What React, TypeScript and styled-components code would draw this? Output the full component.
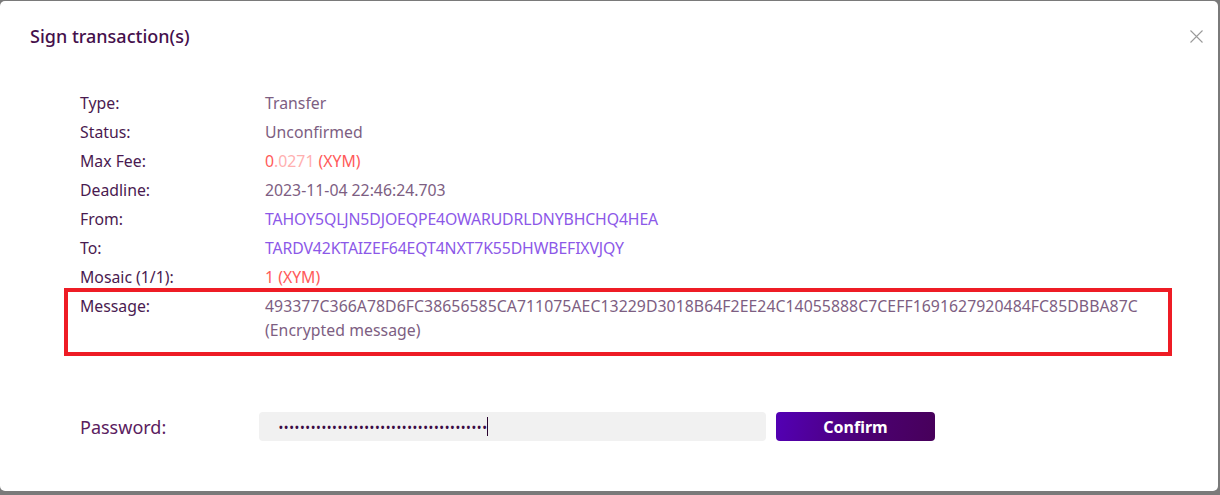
import React from "react";
import styled, { createGlobalStyle } from "styled-components";

const Global = createGlobalStyle`
  html, body { margin: 0; padding: 0; }
  body {
    background: #7a7a7a;
    font-family: "Noto Sans", "Open Sans", sans-serif;
    width: 1220px;
    height: 495px;
    overflow: hidden;
  }
`;

const Page = styled.div`
  width: 1220px;
  height: 495px;
  padding: 1px 2px 0 0;
  box-sizing: border-box;
`;

const Modal = styled.div`
  width: 1218px;
  height: 490px;
  background: #ffffff;
  border-radius: 5px;
  display: flex;
  flex-direction: column;
`;

const Header = styled.div`
  height: 72px;
  display: flex;
  align-items: center;
  justify-content: space-between;
  padding: 0 15px 0 30px;
  box-sizing: border-box;
`;

const Title = styled.h1`
  margin: 0;
  margin-top: -2px;
  font-size: 18px;
  font-weight: 500;
  color: #45104c;
`;

const Close = styled.button`
  border: none;
  background: none;
  padding: 0;
  width: 14px;
  height: 14px;
  margin-top: -2px;
  display: flex;
  align-items: center;
  justify-content: center;
  cursor: pointer;
`;

const Details = styled.div`
  padding: 15px 46px 0 64px;
  display: flex;
  flex-direction: column;
`;

const Row = styled.div`
  display: grid;
  grid-template-columns: 185px 1fr;
  height: 29px;
  align-items: center;
  padding-left: 16px;
  font-size: 15.8px;
`;

const Label = styled.span`
  color: #4a1a50;
`;

type Tone = "plain" | "address" | "red";

const Value = styled.span<{ $tone?: Tone }>`
  color: ${(p) =>
    p.$tone === "address" ? "#8c58e8" : p.$tone === "red" ? "#ff5a5a" : "#7d5e82"};
  letter-spacing: ${(p) => (p.$tone === "address" ? "-0.12px" : "0")};
`;

const Faint = styled.span`
  color: #ffb0b0;
`;

const Highlight = styled.div`
  margin-top: -3px;
  border: 4px solid #ee1c25;
  padding: 2px 0 10px 12px;
  display: grid;
  grid-template-columns: 185px 1fr;
  font-size: 15.8px;
  line-height: 24px;
`;

const Message = styled.div`
  color: #7d5e82;
  display: flex;
  flex-direction: column;
  letter-spacing: 0.05px;
`;

const PasswordRow = styled.div`
  margin-top: 56px;
  padding-left: 80px;
  display: flex;
  align-items: center;
`;

const PasswordLabel = styled.label`
  width: 179px;
  font-size: 18px;
  color: #5a2060;
`;

const Field = styled.div`
  width: 507px;
  height: 29px;
  background: #f1f1f1;
  border-radius: 4px;
  display: flex;
  align-items: center;
  padding-left: 20px;
  box-sizing: border-box;
`;

const Dots = styled.span`
  font-size: 10px;
  font-weight: 700;
  letter-spacing: 1.6px;
  color: #3a0a44;
  line-height: 1;
`;

const Caret = styled.span`
  width: 1px;
  height: 19px;
  background: #2a0530;
  margin-left: -1px;
`;

const ConfirmButton = styled.button`
  margin-left: 10px;
  width: 159px;
  height: 29px;
  border: none;
  border-radius: 4px;
  background: linear-gradient(100deg, #5300b5 0%, #4b0070 60%, #47005a 100%);
  color: #ffffff;
  font-family: "Noto Sans", "Open Sans", sans-serif;
  font-weight: 700;
  font-size: 16px;
  cursor: pointer;
`;

const rows: { label: string; value: React.ReactNode; tone?: Tone }[] = [
  { label: "Type:", value: "Transfer" },
  { label: "Status:", value: "Unconfirmed" },
  {
    label: "Max Fee:",
    value: (
      <>
        0<Faint>.0271</Faint> (XYM)
      </>
    ),
    tone: "red",
  },
  { label: "Deadline:", value: "2023-11-04 22:46:24.703" },
  { label: "From:", value: "TAHOY5QLJN5DJOEQPE4OWARUDRLDNYBHCHQ4HEA", tone: "address" },
  { label: "To:", value: "TARDV42KTAIZEF64EQT4NXT7K55DHWBEFIXVJQY", tone: "address" },
  { label: "Mosaic (1/1):", value: "1 (XYM)", tone: "red" },
];

export default function App() {
  return (
    <>
      <Global />
      <Page>
        <Modal>
          <Header>
            <Title>Sign transaction(s)</Title>
            <Close aria-label="Close">
              <svg width="13" height="13" viewBox="0 0 13 13">
                <path d="M0.5 0.5 L12.5 12.5 M12.5 0.5 L0.5 12.5" stroke="#9a9a9a" strokeWidth="1.1" fill="none" />
              </svg>
            </Close>
          </Header>
          <Details>
            {rows.map((r) => (
              <Row key={r.label}>
                <Label>{r.label}</Label>
                <Value $tone={r.tone}>{r.value}</Value>
              </Row>
            ))}
            <Highlight>
              <Label>Message:</Label>
              <Message>
                <span>493377C366A78D6FC38656585CA711075AEC13229D3018B64F2EE24C14055888C7CEFF1691627920484FC85DBBA87C</span>
                <span>(Encrypted message)</span>
              </Message>
            </Highlight>
          </Details>
          <PasswordRow>
            <PasswordLabel>Password:</PasswordLabel>
            <Field>
              <Dots>{"•".repeat(39)}</Dots>
              <Caret />
            </Field>
            <ConfirmButton>Confirm</ConfirmButton>
          </PasswordRow>
        </Modal>
      </Page>
    </>
  );
}
